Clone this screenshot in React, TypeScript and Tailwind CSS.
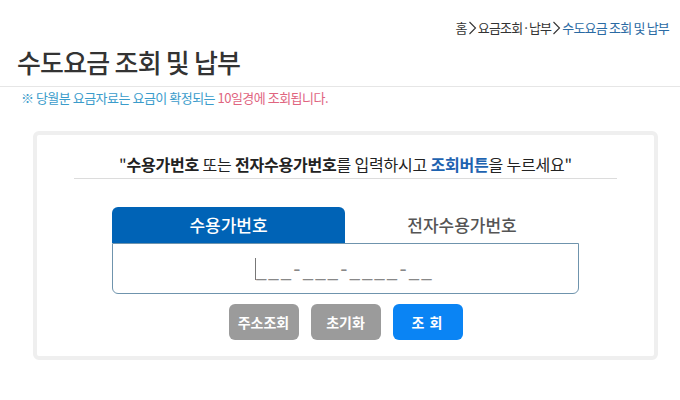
import React from "react";

const Chev = () => (
  <svg width="9" height="14" viewBox="0 0 9 14" className="mx-[1px] inline-block">
    <path d="M1.5 1 L7.5 7 L1.5 13" fill="none" stroke="#333" strokeWidth="1.1" />
  </svg>
);

export default function App() {
  return (
    <div
      className="w-[680px] h-[400px] bg-white overflow-hidden"
      style={{ fontFamily: '"Noto Sans CJK KR", "Noto Sans", sans-serif' }}
    >
      <div className="flex justify-end items-center pr-[11px] pt-[18px] h-[38px] text-[13px] leading-[20px] tracking-[-0.8px] text-[#333]">
        <span>홈</span>
        <Chev />
        <span>요금조회·납부</span>
        <Chev />
        <span className="text-[#2a6aa3]">수도요금 조회 및 납부</span>
      </div>
      <div className="border-b border-[#e6e6e6] pl-[17px] pt-[4px] h-[49px]">
        <h1 className="text-[26px] leading-[40px] font-medium text-[#333] tracking-[-0.8px]">
          수도요금 조회 및 납부
        </h1>
      </div>
      <p className="pl-[21px] pt-[1px] text-[13px] leading-[20px] tracking-[-0.5px] text-[#3b9ccb]">
        ※ 당월분 요금자료는 요금이 확정되는 <span className="text-[#e0657f]">10일경에 조회됩니다.</span>
      </p>
      <div className="ml-[33px] mt-[23px] w-[625px] h-[229px] border-4 border-[#efefef] rounded-md flex flex-col">
        <div className="mx-auto w-[543px] pt-[17px] border-b border-[#dcdcdc] text-center text-[16px] leading-[24px] pb-[2px] tracking-[-0.2px] text-[#222]">
          "<b className="font-bold">수용가번호</b> 또는 <b className="font-bold">전자수용가번호</b>를 입력하시고{" "}
          <b className="font-bold text-[#1e63b0]">조회버튼</b>을 누르세요"
        </div>
        <div className="mx-auto mt-[28px] w-[467px]">
          <div className="flex h-[36px]">
            <div className="w-[233px] bg-[#0063b6] rounded-t-md flex items-center justify-center text-white text-[17px] font-medium">
              수용가번호
            </div>
            <div className="flex-1 flex items-center justify-center text-[#555] text-[17px] font-medium">
              전자수용가번호
            </div>
          </div>
          <div className="h-[51px] border border-[#6f94ad] rounded-b-md flex items-center justify-center">
            <div className="flex items-end h-[22px] ml-[-2px]">
              <span className="w-[1px] h-[22px] bg-[#777]" />
              <span
                className="text-[20px] leading-[22px] text-[#888] tracking-[2.4px]"
                style={{ fontFamily: '"DejaVu Sans", sans-serif' }}
              >
                ___-___-____-__
              </span>
            </div>
          </div>
        </div>
        <div className="flex justify-center gap-[12px] mt-[10px]">
          <button className="w-[70px] h-[36px] rounded-md bg-[#9b9b9b] text-white text-[14px] font-bold">
            주소조회
          </button>
          <button className="w-[70px] h-[36px] rounded-md bg-[#9b9b9b] text-white text-[14px] font-bold">
            초기화
          </button>
          <button className="w-[70px] h-[36px] rounded-md bg-[#0a84f4] text-white text-[14px] font-bold tracking-[1px]">
            조 회
          </button>
        </div>
      </div>
    </div>
  );
}
